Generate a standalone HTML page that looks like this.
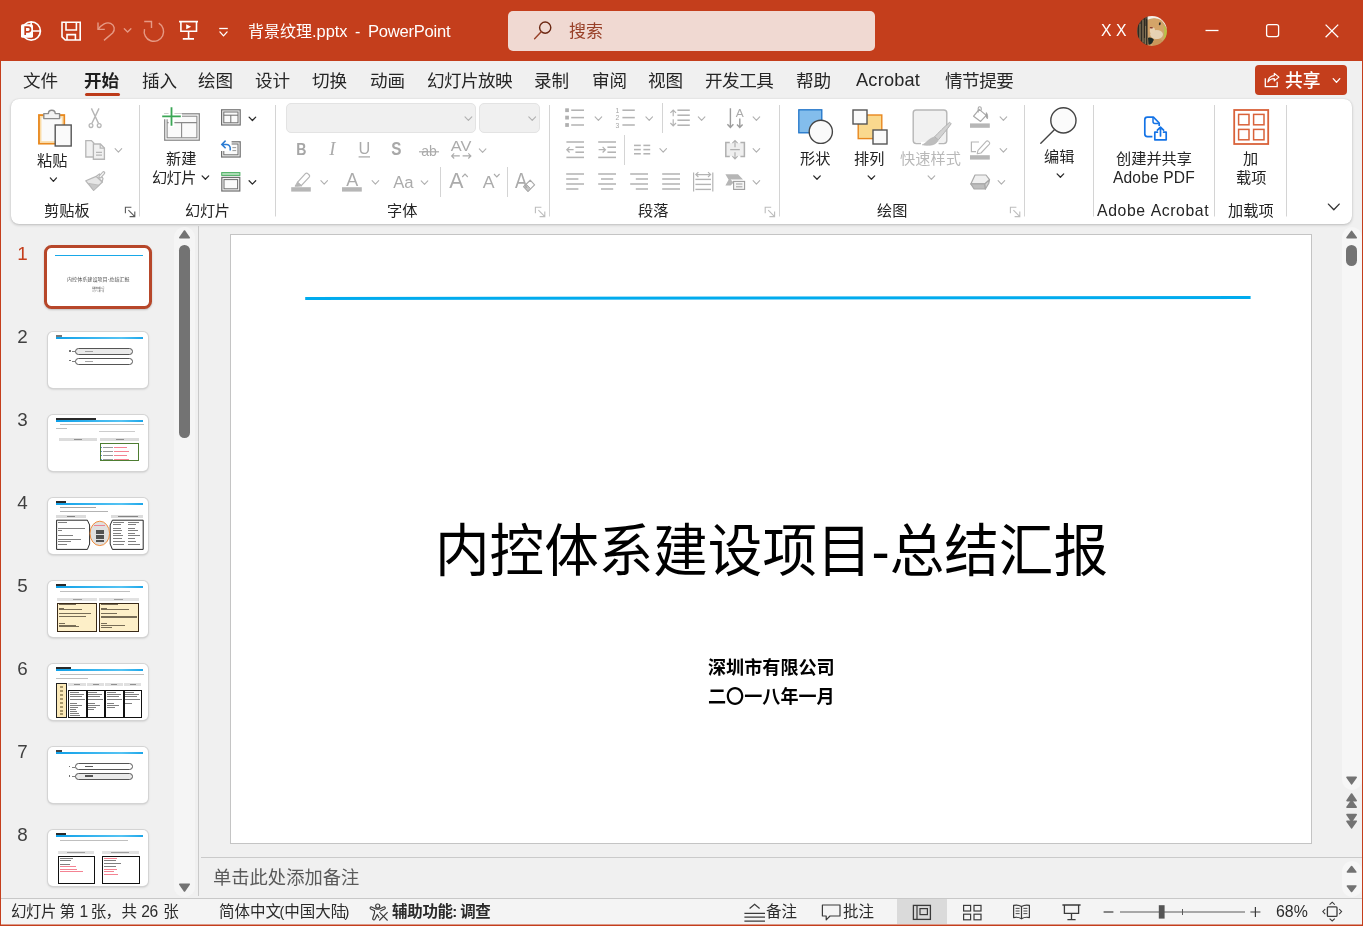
<!DOCTYPE html>
<html lang="zh-CN"><head><meta charset="utf-8"><title>背景纹理.pptx - PowerPoint</title>
<style>
html,body{margin:0;padding:0;background:#f0f0f0;}
body{width:1363px;height:926px;overflow:hidden;font-family:"Liberation Sans","Noto Sans CJK SC",sans-serif;}
#app{position:relative;width:1363px;height:926px;overflow:hidden;background:#f0f0f0;}
#app div{position:absolute;box-sizing:border-box;}
svg.t,svg.i{position:absolute;overflow:visible;display:block;}
svg.t text{font-family:"Liberation Sans","Noto Sans CJK SC",sans-serif;}
svg.i text{font-family:"Liberation Sans",sans-serif;}
#app{will-change:transform;}


</style></head>
<body>
<div id="app">
<div class="titlebar" style="left:0px;top:0px;width:1363px;height:61px;background:#C43E1C;"></div>
<svg class="i" style="left:0px;top:0px" width="1363" height="61" viewBox="0 0 1363 61" ><circle cx="31.2" cy="31" r="9.2" fill="none" stroke="#fff" stroke-width="1.7"/><path d="M31.2 21.8V31H40.4" fill="none" stroke="#fff" stroke-width="1.5"/><rect x="21" y="24.2" width="12" height="13.6" rx="1.6" fill="#fff"/><path d="M25.2 35V27.2H28.2A2.3 2.3 0 0 1 28.2 31.8H25.4" fill="none" stroke="#C43E1C" stroke-width="1.7"/><path d="M62 22.2H80.2V40H65.2L62 36.8Z" fill="none" stroke="#fff" stroke-width="1.6" stroke-linejoin="miter"/><path d="M66 22.2V30H76.4V22.2" fill="none" stroke="#fff" stroke-width="1.6"/><path d="M67 40V34.6H75.4V40" fill="none" stroke="#fff" stroke-width="1.6"/><path d="M98 22.5V29.4H104.8" fill="none" stroke="#E69A85" stroke-width="1.4"/><path d="M98.4 29.2C101.5 24.6 106.6 21.6 110.6 23.4C114.6 25.3 115.4 29.6 112.6 33L104 40.4" fill="none" stroke="#E69A85" stroke-width="1.4"/><path d="M124.3 28.75L127.6 32.05L130.9 28.75" fill="none" stroke="#E69A85" stroke-width="1.3" stroke-linecap="round" stroke-linejoin="round"/><path d="M158.75 23.2A9.7 9.7 0 1 1 144.53 29.1" fill="none" stroke="#E69A85" stroke-width="1.4"/><path d="M144.2 21.5H151.5V28" fill="none" stroke="#E69A85" stroke-width="1.4"/><path d="M179 21.6H198" fill="none" stroke="#fff" stroke-width="1.7"/><path d="M180.9 21.6V31.3H196.5V21.6" fill="none" stroke="#fff" stroke-width="1.6"/><path d="M186.2 24.2L191.2 26.7L186.2 29.2Z" fill="#fff"/><path d="M188.6 31.4V38.9M182.8 38.9H194" fill="none" stroke="#fff" stroke-width="1.6"/><path d="M219.2 28.5L227.8 28.5" stroke="#fff" stroke-width="1.3" stroke-linecap="butt" fill="none"/><path d="M219.9 31.9L223.5 35.9L227.1 31.9" fill="none" stroke="#fff" stroke-width="1.3" stroke-linecap="round" stroke-linejoin="round"/><path d="M1205.5 30.5L1218.5 30.5" stroke="#fff" stroke-width="1.3" stroke-linecap="butt" fill="none"/><rect x="1266.6" y="24.6" width="12" height="12" rx="2" fill="none" stroke="#fff" stroke-width="1.3"/><path d="M1325.6 24.6L1338.2 37.2M1338.2 24.6L1325.6 37.2" stroke="#fff" stroke-width="1.3" fill="none"/></svg>
<svg class="t" style="left:248px;top:20.6px" width="101.55" height="20.8" viewBox="0 -16 101.55 20.8" fill="#fff"><title>背景纹理.pptx</title><text x="0" y="0" font-size="16">背景纹理</text><text x="64" y="0" font-size="16.4">.pptx</text></svg>
<svg class="t" style="left:355.4px;top:20.6px" width="7.33" height="20.8" viewBox="0 -16 7.33 20.8" fill="#fff"><title>-</title><text x="0" y="0" font-size="16">-</text></svg>
<svg class="t" style="left:368.4px;top:20.6px" width="84.39" height="20.8" viewBox="0 -16 84.39 20.8" fill="#fff"><title>PowerPoint</title><text x="0" y="0" font-size="16.6" letter-spacing="-0.25">PowerPoint</text></svg>
<div class="search" style="left:508px;top:11px;width:367px;height:40px;background:#F0D9D2;border-radius:5px;"></div>
<svg class="i" style="left:508px;top:11px" width="367" height="40" viewBox="508 11 367 40" ><circle cx="545.2" cy="27.6" r="5.6" fill="none" stroke="#6B2712" stroke-width="1.4"/><path d="M541.2 31.8L534.6 38.8" stroke="#984028" stroke-width="1.4" stroke-linecap="round" fill="none"/></svg>
<svg class="t" style="left:569.4px;top:20px" width="36" height="22.1" viewBox="0 -17 36 22.1" fill="#984028"><title>搜索</title><text x="0" y="0" font-size="17">搜索</text></svg>
<svg class="t" style="left:1101.4px;top:20px" width="27.62" height="20.8" viewBox="0 -16 27.62 20.8" fill="#fff"><title>X X</title><text x="0" y="0" font-size="15.8" letter-spacing="0.05">X&#160;X</text></svg>
<svg class="i avatar" style="left:1137.1px;top:15.8px" width="30" height="30" viewBox="0 0 30 30"><defs><clipPath id="avc"><circle cx="15" cy="15" r="15"/></clipPath><filter id="avb" x="-10%" y="-10%" width="120%" height="120%"><feGaussianBlur stdDeviation="0.75"/></filter></defs><g clip-path="url(#avc)"><g filter="url(#avb)"><rect x="-2" y="-2" width="34" height="34" fill="#CFA46E"/><path d="M9 -2H32V16C29.6 13 28.4 8 24.6 4.4C20 1.6 13 1.6 9 5Z" fill="#F4F2EA"/><path d="M26.4 9C29 11 30.6 15 30.4 19C29.6 22 28 24 26.6 25C27.4 20 27.6 14 26.4 9Z" fill="#B9C247"/><ellipse cx="17.6" cy="11.6" rx="8.2" ry="9" fill="#D4A468"/><ellipse cx="19.6" cy="18.6" rx="6.4" ry="4.6" fill="#E6D2B4"/><ellipse cx="15.4" cy="14.4" rx="2.6" ry="3.2" fill="#E9D3B3"/><path d="M12.6 11.4C13.8 10.8 15.4 11 16.4 11.8C15.6 12.8 13.8 13 12.6 11.4Z" fill="#8A3A2A"/><ellipse cx="22.8" cy="7.8" rx="0.9" ry="1.5" fill="#2A2A22" transform="rotate(15 22.8 7.8)"/><path d="M11 22C13 21 16 22 17 24C16 27 14 29 11.4 28.6Z" fill="#1E2A26"/><path d="M16 25C20 22 24 23 26 25C24 29 20 31 15 30.6Z" fill="#C9975A"/><rect x="-2" y="-2" width="12.6" height="34" fill="#514838"/><path d="M1.6 6V28M4.4 2V30M7.4 1V22M9.6 3V30" stroke="#2E2A20" stroke-width="1.1" fill="none"/><path d="M3 8V24M6 4V26M8.6 10V28" stroke="#8E7E5C" stroke-width="0.9" fill="none"/></g></g></svg>
<div class="tabs" style="left:1px;top:61px;width:1361px;height:38px;background:#F0F0F0;"></div>
<svg class="t" style="left:22.8px;top:69px" width="37.2" height="22.88" viewBox="0 -17.6 37.2 22.88" fill="#262626"><title>文件</title><text x="0" y="0" font-size="17.6">文件</text></svg>
<svg class="t" style="left:141.6px;top:69px" width="37.2" height="22.88" viewBox="0 -17.6 37.2 22.88" fill="#262626"><title>插入</title><text x="0" y="0" font-size="17.6">插入</text></svg>
<svg class="t" style="left:198.4px;top:69px" width="37.2" height="22.88" viewBox="0 -17.6 37.2 22.88" fill="#262626"><title>绘图</title><text x="0" y="0" font-size="17.6">绘图</text></svg>
<svg class="t" style="left:255.4px;top:69px" width="37.2" height="22.88" viewBox="0 -17.6 37.2 22.88" fill="#262626"><title>设计</title><text x="0" y="0" font-size="17.6">设计</text></svg>
<svg class="t" style="left:312.4px;top:69px" width="37.2" height="22.88" viewBox="0 -17.6 37.2 22.88" fill="#262626"><title>切换</title><text x="0" y="0" font-size="17.6">切换</text></svg>
<svg class="t" style="left:369.6px;top:69px" width="37.2" height="22.88" viewBox="0 -17.6 37.2 22.88" fill="#262626"><title>动画</title><text x="0" y="0" font-size="17.6">动画</text></svg>
<svg class="t" style="left:426.8px;top:69px" width="87.25" height="22.88" viewBox="0 -17.6 87.25 22.88" fill="#262626"><title>幻灯片放映</title><text x="0" y="0" font-size="17.6" letter-spacing="-0.55">幻灯片放映</text></svg>
<svg class="t" style="left:534.4px;top:69px" width="37.2" height="22.88" viewBox="0 -17.6 37.2 22.88" fill="#262626"><title>录制</title><text x="0" y="0" font-size="17.6">录制</text></svg>
<svg class="t" style="left:591.6px;top:69px" width="37.2" height="22.88" viewBox="0 -17.6 37.2 22.88" fill="#262626"><title>审阅</title><text x="0" y="0" font-size="17.6">审阅</text></svg>
<svg class="t" style="left:648.4px;top:69px" width="37.2" height="22.88" viewBox="0 -17.6 37.2 22.88" fill="#262626"><title>视图</title><text x="0" y="0" font-size="17.6">视图</text></svg>
<svg class="t" style="left:705.4px;top:69px" width="70.4" height="22.88" viewBox="0 -17.6 70.4 22.88" fill="#262626"><title>开发工具</title><text x="0" y="0" font-size="17.6" letter-spacing="-0.5">开发工具</text></svg>
<svg class="t" style="left:796.4px;top:69px" width="37.2" height="22.88" viewBox="0 -17.6 37.2 22.88" fill="#262626"><title>帮助</title><text x="0" y="0" font-size="17.6">帮助</text></svg>
<svg class="t" style="left:944.8px;top:69px" width="70.4" height="22.88" viewBox="0 -17.6 70.4 22.88" fill="#262626"><title>情节提要</title><text x="0" y="0" font-size="17.6" letter-spacing="-0.5">情节提要</text></svg>
<svg class="t" style="left:84.3px;top:69px" width="37.2" height="22.88" viewBox="0 -17.6 37.2 22.88" fill="#1f1f1f"><title>开始</title><text x="0" y="0" font-size="17.6" font-weight="bold">开始</text></svg>
<svg class="t" style="left:856.2px;top:68.4px" width="66.12" height="22.88" viewBox="0 -17.6 66.12 22.88" fill="#262626"><title>Acrobat</title><text x="0" y="0" font-size="18.2" letter-spacing="0.2">Acrobat</text></svg>
<div style="left:85px;top:93px;width:35px;height:3px;background:#BC3A19;border-radius:1.5px;"></div>
<div class="share" style="left:1255px;top:65px;width:92px;height:30px;background:#C43E1C;border-radius:4px;"></div>
<svg class="i" style="left:1255px;top:65px" width="92" height="30" viewBox="1255 65 92 30" ><path d="M1265.3 78.2V86.6H1277.2V81.8" fill="none" stroke="#fff" stroke-width="1.3"/><path d="M1274.3 73.4L1278.9 77.1L1274.3 80.9V78.7C1271.4 78.7 1269.4 79.7 1267.9 82C1268.3 78.2 1270.8 75.9 1274.3 75.6Z" fill="none" stroke="#fff" stroke-width="1.2" stroke-linejoin="round"/><path d="M1333.2 78.65L1336.5 82.35L1339.8 78.65" fill="none" stroke="#fff" stroke-width="1.35" stroke-linecap="round" stroke-linejoin="round"/></svg>
<svg class="t" style="left:1284.5px;top:68.6px" width="37.6" height="23.14" viewBox="0 -17.8 37.6 23.14" fill="#fff"><title>共享</title><text x="0" y="0" font-size="17.8" font-weight="500">共享</text></svg>
<div class="ribbon" style="left:11px;top:99px;width:1341px;height:124.5px;background:#fff;border-radius:8px;box-shadow:0 1px 3px rgba(0,0,0,.22),0 0 1px rgba(0,0,0,.12);"></div>
<div class="combo" style="left:286px;top:103px;width:190px;height:30px;background:#F0F0F0;border:1px solid #E3E3E3;border-radius:5px;"></div>
<div class="combo" style="left:478.5px;top:103px;width:61.5px;height:30px;background:#F0F0F0;border:1px solid #E3E3E3;border-radius:5px;"></div>
<svg class="i" style="left:11px;top:99px" width="1341" height="124" viewBox="11 99 1341 124" ><path d="M139.5 105L139.5 216.5" stroke="#D4D4D4" stroke-width="1" stroke-linecap="butt" fill="none"/><path d="M275.5 105L275.5 216.5" stroke="#D4D4D4" stroke-width="1" stroke-linecap="butt" fill="none"/><path d="M549.5 105L549.5 216.5" stroke="#D4D4D4" stroke-width="1" stroke-linecap="butt" fill="none"/><path d="M779.5 105L779.5 216.5" stroke="#D4D4D4" stroke-width="1" stroke-linecap="butt" fill="none"/><path d="M1024.5 105L1024.5 216.5" stroke="#D4D4D4" stroke-width="1" stroke-linecap="butt" fill="none"/><path d="M1093.5 105L1093.5 216.5" stroke="#D4D4D4" stroke-width="1" stroke-linecap="butt" fill="none"/><path d="M1214.5 105L1214.5 216.5" stroke="#D4D4D4" stroke-width="1" stroke-linecap="butt" fill="none"/><path d="M1286.5 105L1286.5 216.5" stroke="#D4D4D4" stroke-width="1" stroke-linecap="butt" fill="none"/><path d="M440.5 167L440.5 197" stroke="#D4D4D4" stroke-width="1" stroke-linecap="butt" fill="none"/><path d="M507.5 167L507.5 197" stroke="#D4D4D4" stroke-width="1" stroke-linecap="butt" fill="none"/><path d="M662.5 103L662.5 133" stroke="#D4D4D4" stroke-width="1" stroke-linecap="butt" fill="none"/><path d="M624.5 135L624.5 165" stroke="#D4D4D4" stroke-width="1" stroke-linecap="butt" fill="none"/><rect x="39" y="115.1" width="25.2" height="28.5" fill="#FAFAFA" stroke="#E8891F" stroke-width="1.9"/><rect x="40.7" y="116.8" width="21.8" height="25.1" fill="none" stroke="#FBDCA6" stroke-width="1.5"/><path d="M43.8 118.6V113.6H48.4A3.4 3.4 0 0 1 55.2 113.6H59.6V118.6Z" fill="#F3F3F3" stroke="#8C8C8C" stroke-width="1.4" stroke-linejoin="round"/><rect x="55.2" y="125" width="16" height="21" fill="#FAFAFA" stroke="#555" stroke-width="1.4"/><path d="M50.3 177.9L53.4 181.3L56.5 177.9" fill="none" stroke="#2a2a2a" stroke-width="1.25" stroke-linecap="round" stroke-linejoin="round"/><path d="M91.4 108.4L98.5 123.4M99 108.4L91.9 123.4" fill="none" stroke="#B6B6B6" stroke-width="1.35"/><circle cx="91" cy="125.6" r="1.9" fill="#fff" stroke="#B6B6B6" stroke-width="1.3"/><circle cx="99.2" cy="125.6" r="1.9" fill="#fff" stroke="#B6B6B6" stroke-width="1.3"/><path d="M85.8 140.6H91.4L93.8 143V157H85.8Z" fill="#F1F1F1" stroke="#B6B6B6" stroke-width="1.3"/><path d="M93.4 144H100.4L104.4 148V159.2H93.4Z" fill="#F1F1F1" stroke="#B6B6B6" stroke-width="1.35"/><path d="M100.2 144.2V148.2H104.2M96 152.4H102M96 155.2H102" fill="none" stroke="#B6B6B6" stroke-width="1.2"/><path d="M115.1 148.7L118.4 152.1L121.7 148.7" fill="none" stroke="#B0B0B0" stroke-width="1.1" stroke-linecap="round" stroke-linejoin="round"/><path d="M85.8 180.8L96.2 176.4L102.4 182L93.6 190.4Z" fill="#E6E6E6" stroke="#B6B6B6" stroke-width="1.2" stroke-linejoin="round"/><path d="M88.6 183.4L99.2 185.2L93.6 190.4Z" fill="#C8C8C8" stroke="#B6B6B6" stroke-width="0.8" stroke-linejoin="round"/><path d="M96.4 176.2L99.4 174L103 178.4L102.2 181.8Z" fill="#F4F4F4" stroke="#B6B6B6" stroke-width="1.2" stroke-linejoin="round"/><path d="M100 176.8L103.6 172.8" stroke="#B6B6B6" stroke-width="3.4" stroke-linecap="round" fill="none"/><path d="M100.2 176.6L103.4 173" stroke="#F6F6F6" stroke-width="1.3" stroke-linecap="round" fill="none"/><path d="M125.4 213.2V207.2H131.4" fill="none" stroke="#5a5a5a" stroke-width="1.1"/><path d="M128.4 210.2L134.6 216.4M134.8 211.4V216.6H129.6" fill="none" stroke="#5a5a5a" stroke-width="1.1"/><rect x="164.7" y="113.8" width="34.6" height="26.4" fill="#fff" stroke="#8A8A8A" stroke-width="1.3"/><rect x="167.1" y="116.2" width="29.8" height="21.6" fill="#FAFAFA" stroke="#8A8A8A" stroke-width="1.1"/><path d="M167.1 122.6H196.9M181.6 122.6V137.8" fill="none" stroke="#8A8A8A" stroke-width="1.1"/><path d="M168.6 106H174.4V113.4H182V119.2H174.4V127H168.6V119.2H160.6V113.4H168.6Z" fill="#fff"/><path d="M171.5 107.2V125.8M162.2 116.3H180.8" fill="none" stroke="#3AA655" stroke-width="1.8"/><path d="M202.1 175.9L205.4 179.3L208.7 175.9" fill="none" stroke="#2a2a2a" stroke-width="1.25" stroke-linecap="round" stroke-linejoin="round"/><rect x="221.6" y="109.8" width="18.6" height="15.2" fill="#F2F2F2" stroke="#6E6E6E" stroke-width="1.2"/><rect x="223.8" y="112" width="14.2" height="10.8" fill="#FAFAFA" stroke="#6E6E6E" stroke-width="1"/><path d="M223.8 115.2H238M230.8 115.2V122.8" fill="none" stroke="#6E6E6E" stroke-width="1"/><path d="M249.1 117.1L252.4 120.5L255.7 117.1" fill="none" stroke="#2a2a2a" stroke-width="1.25" stroke-linecap="round" stroke-linejoin="round"/><rect x="221.6" y="141.8" width="18.6" height="15.2" fill="#F2F2F2" stroke="#6E6E6E" stroke-width="1.2"/><rect x="223.8" y="144" width="14.2" height="10.8" fill="#FAFAFA" stroke="#6E6E6E" stroke-width="1"/><rect x="219" y="139" width="12.6" height="12" fill="#fff"/><path d="M225.6 140.6L221.8 144.4L225.6 148.2M222.2 144.4H226.6A3.6 3.6 0 0 1 230.2 148V150.6" fill="none" stroke="#2B7CD3" stroke-width="1.5"/><path d="M232.4 147.6H236.2M232.4 150.6H236.2" stroke="#9a9a9a" stroke-width="1" fill="none"/><rect x="221.7" y="172.6" width="18.2" height="2.8" fill="#B5E0BD" stroke="#4CAF62" stroke-width="1"/><rect x="221.8" y="177.4" width="18" height="13.6" fill="#F2F2F2" stroke="#6E6E6E" stroke-width="1.2"/><rect x="224" y="179.6" width="13.6" height="9.2" fill="#FAFAFA" stroke="#6E6E6E" stroke-width="1"/><path d="M249.1 180.7L252.4 184.1L255.7 180.7" fill="none" stroke="#2a2a2a" stroke-width="1.25" stroke-linecap="round" stroke-linejoin="round"/><path d="M465 116.9L468.4 120.3L471.8 116.9" fill="none" stroke="#B0B0B0" stroke-width="1.1" stroke-linecap="round" stroke-linejoin="round"/><path d="M528.8 116.9L532.2 120.3L535.6 116.9" fill="none" stroke="#B0B0B0" stroke-width="1.1" stroke-linecap="round" stroke-linejoin="round"/><path d="M358.6 156.9L370 156.9" stroke="#ABABAB" stroke-width="1.3" stroke-linecap="butt" fill="none"/><path d="M419 151.8L439 151.8" stroke="#ABABAB" stroke-width="1.2" stroke-linecap="butt" fill="none"/><path d="M451.6 155.9H459.8M454.2 153.3L451.6 155.9L454.2 158.5M462.6 155.9H470.9M468.3 153.3L470.9 155.9L468.3 158.5" fill="none" stroke="#ABABAB" stroke-width="1.1"/><path d="M479.3 148.9L482.6 152.3L485.9 148.9" fill="none" stroke="#B0B0B0" stroke-width="1.1" stroke-linecap="round" stroke-linejoin="round"/><rect x="291.2" y="187.2" width="19.6" height="4.4" fill="#B6B6B6"/><path d="M297.4 182.4L305.4 173.6A1.6 1.6 0 0 1 307.8 173.6L309.2 175A1.6 1.6 0 0 1 309.2 177.2L301.2 185.6Z" fill="#fff" stroke="#B6B6B6" stroke-width="1.2"/><path d="M297.6 182.2L301.4 185.8L298.6 186.2L295 186.2Z" fill="#B6B6B6" stroke="#B6B6B6" stroke-width="1"/><path d="M320.9 180.7L324.2 184.1L327.5 180.7" fill="none" stroke="#B0B0B0" stroke-width="1.1" stroke-linecap="round" stroke-linejoin="round"/><rect x="342" y="187.2" width="19.8" height="4.4" fill="#B6B6B6"/><path d="M372.1 180.7L375.4 184.1L378.7 180.7" fill="none" stroke="#B0B0B0" stroke-width="1.1" stroke-linecap="round" stroke-linejoin="round"/><path d="M421.2 180.9L424.5 184.3L427.8 180.9" fill="none" stroke="#B0B0B0" stroke-width="1.1" stroke-linecap="round" stroke-linejoin="round"/><path d="M462.2 177L465 174L467.8 177" fill="none" stroke="#ABABAB" stroke-width="1.1"/><path d="M494 174L496.8 177L499.6 174" fill="none" stroke="#ABABAB" stroke-width="1.1"/><path d="M523.6 186.6L530.2 180.2L534.6 184.8L528 191.4Z" fill="#fff" stroke="#ABABAB" stroke-width="1.2" stroke-linejoin="round"/><path d="M523.6 186.6L526.2 184.1L530.6 188.7L528 191.4Z" fill="#C4C4C4" stroke="#ABABAB" stroke-width="1" stroke-linejoin="round"/><path d="M535.4 213.2V207.2H541.4" fill="none" stroke="#BDBDBD" stroke-width="1.1"/><path d="M538.4 210.2L544.6 216.4M544.8 211.4V216.6H539.6" fill="none" stroke="#BDBDBD" stroke-width="1.1"/><rect x="565.2" y="108.3" width="3.7" height="3.8" fill="#B0B0B0"/><path d="M571.2 110.2L584 110.2" stroke="#B4B4B4" stroke-width="1.55" stroke-linecap="butt" fill="none"/><rect x="565.2" y="115.7" width="3.7" height="3.8" fill="#B0B0B0"/><path d="M571.2 117.6L584 117.6" stroke="#B4B4B4" stroke-width="1.55" stroke-linecap="butt" fill="none"/><rect x="565.2" y="123.1" width="3.7" height="3.8" fill="#B0B0B0"/><path d="M571.2 125L584 125" stroke="#B4B4B4" stroke-width="1.55" stroke-linecap="butt" fill="none"/><path d="M595.1 116.9L598.4 120.3L601.7 116.9" fill="none" stroke="#B0B0B0" stroke-width="1.1" stroke-linecap="round" stroke-linejoin="round"/><path d="M622.4 110.2L634.8 110.2" stroke="#B4B4B4" stroke-width="1.55" stroke-linecap="butt" fill="none"/><path d="M622.4 117.6L634.8 117.6" stroke="#B4B4B4" stroke-width="1.55" stroke-linecap="butt" fill="none"/><path d="M622.4 125L634.8 125" stroke="#B4B4B4" stroke-width="1.55" stroke-linecap="butt" fill="none"/><text x="615.6" y="112.8" font-size="6.8" fill="#A6A6A6">1</text><text x="615.6" y="120.4" font-size="6.8" fill="#A6A6A6">2</text><text x="615.6" y="127.9" font-size="6.8" fill="#A6A6A6">3</text><path d="M645.9 116.9L649.2 120.3L652.5 116.9" fill="none" stroke="#B0B0B0" stroke-width="1.1" stroke-linecap="round" stroke-linejoin="round"/><path d="M677.4 110.2L689.8 110.2" stroke="#B4B4B4" stroke-width="1.55" stroke-linecap="butt" fill="none"/><path d="M677.4 115.2L689.8 115.2" stroke="#B4B4B4" stroke-width="1.55" stroke-linecap="butt" fill="none"/><path d="M677.4 120.2L689.8 120.2" stroke="#B4B4B4" stroke-width="1.55" stroke-linecap="butt" fill="none"/><path d="M677.4 125.2L689.8 125.2" stroke="#B4B4B4" stroke-width="1.55" stroke-linecap="butt" fill="none"/><path d="M673.2 110V116.2M670.4 112.8L673.2 110L676 112.8M673.2 119.2V125.8M670.4 123L673.2 125.8L676 123" fill="none" stroke="#B4B4B4" stroke-width="1.2"/><path d="M698.3 116.9L701.6 120.3L704.9 116.9" fill="none" stroke="#B0B0B0" stroke-width="1.1" stroke-linecap="round" stroke-linejoin="round"/><path d="M730.4 108.2V127.4M727.4 124.2L730.4 127.4L733.4 124.2" fill="none" stroke="#9C9C9C" stroke-width="1.4"/><path d="M739.8 118.6V127.4M737 124.4L739.8 127.4L742.6 124.4" fill="none" stroke="#9C9C9C" stroke-width="1.4"/><path d="M753.1 116.9L756.4 120.3L759.7 116.9" fill="none" stroke="#B0B0B0" stroke-width="1.1" stroke-linecap="round" stroke-linejoin="round"/><path d="M566.4 142L584 142" stroke="#B4B4B4" stroke-width="1.55" stroke-linecap="butt" fill="none"/><path d="M566.4 157.4L584 157.4" stroke="#B4B4B4" stroke-width="1.55" stroke-linecap="butt" fill="none"/><path d="M575.4 147.2L584 147.2" stroke="#B4B4B4" stroke-width="1.55" stroke-linecap="butt" fill="none"/><path d="M575.4 152.2L584 152.2" stroke="#B4B4B4" stroke-width="1.55" stroke-linecap="butt" fill="none"/><path d="M566.8 149.7H573.6M569.6 146.9L566.8 149.7L569.6 152.5" fill="none" stroke="#B4B4B4" stroke-width="1.25"/><path d="M598.2 142L616 142" stroke="#B4B4B4" stroke-width="1.55" stroke-linecap="butt" fill="none"/><path d="M598.2 157.4L616 157.4" stroke="#B4B4B4" stroke-width="1.55" stroke-linecap="butt" fill="none"/><path d="M607.4 147.2L616 147.2" stroke="#B4B4B4" stroke-width="1.55" stroke-linecap="butt" fill="none"/><path d="M607.4 152.2L616 152.2" stroke="#B4B4B4" stroke-width="1.55" stroke-linecap="butt" fill="none"/><path d="M598.6 149.7H605.4M602.6 146.9L605.4 149.7L602.6 152.5" fill="none" stroke="#B4B4B4" stroke-width="1.25"/><path d="M634 145.4L640.8 145.4" stroke="#B4B4B4" stroke-width="1.55" stroke-linecap="butt" fill="none"/><path d="M643.4 145.4L650.2 145.4" stroke="#B4B4B4" stroke-width="1.55" stroke-linecap="butt" fill="none"/><path d="M634 149.6L640.8 149.6" stroke="#B4B4B4" stroke-width="1.55" stroke-linecap="butt" fill="none"/><path d="M643.4 149.6L650.2 149.6" stroke="#B4B4B4" stroke-width="1.55" stroke-linecap="butt" fill="none"/><path d="M634 153.8L640.8 153.8" stroke="#B4B4B4" stroke-width="1.55" stroke-linecap="butt" fill="none"/><path d="M643.4 153.8L650.2 153.8" stroke="#B4B4B4" stroke-width="1.55" stroke-linecap="butt" fill="none"/><path d="M659.9 148.7L663.2 152.1L666.5 148.7" fill="none" stroke="#B0B0B0" stroke-width="1.1" stroke-linecap="round" stroke-linejoin="round"/><rect x="725.8" y="143" width="18.6" height="13.2" fill="#EFEFEF"/><path d="M729.8 142.6H725.8V156.6H729.8M740.4 142.6H744.4V156.6H740.4" fill="none" stroke="#B0B0B0" stroke-width="1.5"/><path d="M735 140.6V147.2M735 152.2V158.8M732.4 143.2L735 140.6L737.6 143.2M732.4 156.2L735 158.8L737.6 156.2M730.2 149.7H739.8" fill="none" stroke="#B0B0B0" stroke-width="1.2"/><path d="M753.1 148.7L756.4 152.1L759.7 148.7" fill="none" stroke="#B0B0B0" stroke-width="1.1" stroke-linecap="round" stroke-linejoin="round"/><path d="M566.2 174L584 174" stroke="#B4B4B4" stroke-width="1.55" stroke-linecap="butt" fill="none"/><path d="M598.2 174L616 174" stroke="#B4B4B4" stroke-width="1.55" stroke-linecap="butt" fill="none"/><path d="M630.2 174L648 174" stroke="#B4B4B4" stroke-width="1.55" stroke-linecap="butt" fill="none"/><path d="M662.2 174L680 174" stroke="#B4B4B4" stroke-width="1.55" stroke-linecap="butt" fill="none"/><path d="M566.2 179L578.4 179" stroke="#B4B4B4" stroke-width="1.55" stroke-linecap="butt" fill="none"/><path d="M601 179L613.2 179" stroke="#B4B4B4" stroke-width="1.55" stroke-linecap="butt" fill="none"/><path d="M635.8 179L648 179" stroke="#B4B4B4" stroke-width="1.55" stroke-linecap="butt" fill="none"/><path d="M662.2 179L680 179" stroke="#B4B4B4" stroke-width="1.55" stroke-linecap="butt" fill="none"/><path d="M566.2 184L584 184" stroke="#B4B4B4" stroke-width="1.55" stroke-linecap="butt" fill="none"/><path d="M598.2 184L616 184" stroke="#B4B4B4" stroke-width="1.55" stroke-linecap="butt" fill="none"/><path d="M630.2 184L648 184" stroke="#B4B4B4" stroke-width="1.55" stroke-linecap="butt" fill="none"/><path d="M662.2 184L680 184" stroke="#B4B4B4" stroke-width="1.55" stroke-linecap="butt" fill="none"/><path d="M566.2 189L578.4 189" stroke="#B4B4B4" stroke-width="1.55" stroke-linecap="butt" fill="none"/><path d="M601 189L613.2 189" stroke="#B4B4B4" stroke-width="1.55" stroke-linecap="butt" fill="none"/><path d="M635.8 189L648 189" stroke="#B4B4B4" stroke-width="1.55" stroke-linecap="butt" fill="none"/><path d="M662.2 189L680 189" stroke="#B4B4B4" stroke-width="1.55" stroke-linecap="butt" fill="none"/><path d="M695.4 179.4L711 179.4" stroke="#B4B4B4" stroke-width="1.4" stroke-linecap="butt" fill="none"/><path d="M695.4 184.4L711 184.4" stroke="#B4B4B4" stroke-width="1.4" stroke-linecap="butt" fill="none"/><path d="M695.4 189.4L711 189.4" stroke="#B4B4B4" stroke-width="1.4" stroke-linecap="butt" fill="none"/><path d="M693.6 172.4V191.6M712.8 172.4V191.6" stroke="#B4B4B4" stroke-width="1.2" fill="none"/><path d="M695.8 174.6H710.6M698.4 172.2L695.8 174.6L698.4 177M708 172.2L710.6 174.6L708 177" fill="none" stroke="#B4B4B4" stroke-width="1.15"/><path d="M725.4 174.2H738L743 179.4H730.6L733.6 182.4L730.6 185.4H725.4L728.6 179.8Z" fill="#B6B6B6"/><rect x="733.6" y="181.4" width="11" height="8" fill="#F4F4F4" stroke="#9E9E9E" stroke-width="1.1"/><path d="M736 184H742.4M736 186.8H742.4" stroke="#9E9E9E" stroke-width="1" fill="none"/><path d="M753.1 180.7L756.4 184.1L759.7 180.7" fill="none" stroke="#B0B0B0" stroke-width="1.1" stroke-linecap="round" stroke-linejoin="round"/><path d="M765.2 213.2V207.2H771.2" fill="none" stroke="#BDBDBD" stroke-width="1.1"/><path d="M768.2 210.2L774.4 216.4M774.6 211.4V216.6H769.4" fill="none" stroke="#BDBDBD" stroke-width="1.1"/><rect x="798.8" y="109.8" width="23" height="23" fill="#83BDEC" stroke="#1E73C8" stroke-width="1.3"/><circle cx="820.8" cy="131.8" r="11.6" fill="#FAFAFA" stroke="#454545" stroke-width="1.4"/><path d="M813.7 175.9L817 179.3L820.3 175.9" fill="none" stroke="#2a2a2a" stroke-width="1.25" stroke-linecap="round" stroke-linejoin="round"/><rect x="858.2" y="115" width="23.6" height="23.6" fill="#FAD98E" stroke="#E8871E" stroke-width="1.4"/><rect x="853" y="110" width="14" height="14" fill="#FAFAFA" stroke="#555" stroke-width="1.4"/><rect x="873" y="130" width="14" height="14" fill="#FAFAFA" stroke="#555" stroke-width="1.4"/><path d="M868.1 175.9L871.4 179.3L874.7 175.9" fill="none" stroke="#2a2a2a" stroke-width="1.25" stroke-linecap="round" stroke-linejoin="round"/><rect x="913.2" y="110" width="33.6" height="33.6" rx="3" fill="#F1F1F1" stroke="#B6B6B6" stroke-width="1.4"/><path d="M921 144H938.6" stroke="#fff" stroke-width="4.4" fill="none"/><path d="M949.6 122.2L951.2 123.8C946.8 129.8 941.8 135.6 938.4 139.8L934.6 136.8C938.6 132.6 944.4 126.8 949.6 122.2Z" fill="#D2D2D2" stroke="#B2B2B2" stroke-width="1" stroke-linejoin="round"/><path d="M934.4 137L938 140C937.4 143.8 932 146.6 922.2 144.8C926.4 143.4 928 138.8 934.4 137Z" fill="#BEBEBE" stroke="#B2B2B2" stroke-width="0.6"/><path d="M928.1 175.9L931.4 179.3L934.7 175.9" fill="none" stroke="#B0B0B0" stroke-width="1.2" stroke-linecap="round" stroke-linejoin="round"/><rect x="970" y="123.4" width="19.8" height="4.4" fill="#B6B6B6"/><path d="M973.6 116.2L979.2 109.4L986.2 115.4L980.6 121.4Z" fill="#fff" stroke="#A8A8A8" stroke-width="1.2" stroke-linejoin="round"/><path d="M978.2 112.4V108.2A1.5 1.5 0 0 1 981.2 108.2V110.6" fill="none" stroke="#A8A8A8" stroke-width="1.1"/><path d="M986.4 112.6C987.6 114.4 988 116.6 987.4 118.8C986.2 118 985.6 116 986.4 112.6Z" fill="#9E9E9E" stroke="#9E9E9E" stroke-width="0.8"/><path d="M1000.1 116.9L1003.4 120.3L1006.7 116.9" fill="none" stroke="#B0B0B0" stroke-width="1.1" stroke-linecap="round" stroke-linejoin="round"/><rect x="970" y="155.2" width="19.8" height="4.4" fill="#B6B6B6"/><path d="M979 142H971.4V151.6H976" fill="none" stroke="#B6B6B6" stroke-width="1.2"/><path d="M978 150.4L986.2 141.4A1.5 1.5 0 0 1 988.4 141.4L989.2 142.2A1.5 1.5 0 0 1 989.2 144.4L981 153L977.2 153.8Z" fill="#fff" stroke="#B6B6B6" stroke-width="1.1" stroke-linejoin="round"/><path d="M1000.1 148.7L1003.4 152.1L1006.7 148.7" fill="none" stroke="#B0B0B0" stroke-width="1.1" stroke-linecap="round" stroke-linejoin="round"/><path d="M975 175H986L989.5 179.7L984.9 183.9H970.8Z" fill="#F0F0F0" stroke="#A8A8A8" stroke-width="1.2" stroke-linejoin="round"/><path d="M970.8 183.9H984.9L985.4 189H974.1Z" fill="#BDBDBD" stroke="#A8A8A8" stroke-width="1.2" stroke-linejoin="round"/><path d="M984.9 183.9L989.5 179.7L988.8 183.2L985.4 189Z" fill="#D4D4D4" stroke="#A8A8A8" stroke-width="1.2" stroke-linejoin="round"/><path d="M998.1 180.7L1001.4 184.1L1004.7 180.7" fill="none" stroke="#B0B0B0" stroke-width="1.1" stroke-linecap="round" stroke-linejoin="round"/><path d="M1010.4 213.2V207.2H1016.4" fill="none" stroke="#BDBDBD" stroke-width="1.1"/><path d="M1013.4 210.2L1019.6 216.4M1019.8 211.4V216.6H1014.6" fill="none" stroke="#BDBDBD" stroke-width="1.1"/><circle cx="1063.4" cy="120.4" r="12.6" fill="#FBFBFB" stroke="#444" stroke-width="1.4"/><path d="M1054.6 129.6L1040.8 143.2" stroke="#444" stroke-width="1.4" stroke-linecap="round" fill="none"/><path d="M1057.1 173.9L1060.4 177.3L1063.7 173.9" fill="none" stroke="#2a2a2a" stroke-width="1.25" stroke-linecap="round" stroke-linejoin="round"/><path d="M1152.4 136.6H1147.4A2.6 2.6 0 0 1 1144.8 134V119.8A2.6 2.6 0 0 1 1147.4 117.2H1153.4L1159.2 123V126" fill="none" stroke="#1473E6" stroke-width="1.7" stroke-linejoin="round"/><path d="M1153 117.6V121.4A2 2 0 0 0 1155 123.4H1158.8" fill="none" stroke="#1473E6" stroke-width="1.5"/><path d="M1157.4 132.2H1154.8V139.8H1166.2V132.2H1163.6" fill="none" stroke="#1473E6" stroke-width="1.7" stroke-linejoin="round" stroke-linecap="round"/><path d="M1160.5 136V127.4M1157.4 130.2L1160.5 127.2L1163.6 130.2" fill="none" stroke="#1473E6" stroke-width="1.7" stroke-linejoin="round" stroke-linecap="round"/><rect x="1234.2" y="110" width="34" height="34" fill="none" stroke="#D9623A" stroke-width="1.8"/><rect x="1238.6" y="114.4" width="10.4" height="10.4" fill="none" stroke="#D9623A" stroke-width="1.5"/><rect x="1253.6" y="114.4" width="10.4" height="10.4" fill="none" stroke="#D9623A" stroke-width="1.5"/><rect x="1238.6" y="129.4" width="10.4" height="10.4" fill="none" stroke="#D9623A" stroke-width="1.5"/><rect x="1253.6" y="129.4" width="10.4" height="10.4" fill="none" stroke="#D9623A" stroke-width="1.5"/><path d="M1328.4 204.1L1333.8 209.7L1339.2 204.1" fill="none" stroke="#333" stroke-width="1.35" stroke-linecap="round" stroke-linejoin="round"/></svg>
<svg class="t" style="left:36.7px;top:150.6px" width="32.4" height="19.76" viewBox="0 -15.2 32.4 19.76" fill="#242424"><title>粘贴</title><text x="0" y="0" font-size="15.2">粘贴</text></svg>
<svg class="t" style="left:44.4px;top:201px" width="47.6" height="19.76" viewBox="0 -15.2 47.6 19.76" fill="#242424"><title>剪贴板</title><text x="0" y="0" font-size="15.2">剪贴板</text></svg>
<svg class="t" style="left:166.2px;top:149px" width="32.4" height="19.76" viewBox="0 -15.2 32.4 19.76" fill="#242424"><title>新建</title><text x="0" y="0" font-size="15.2">新建</text></svg>
<svg class="t" style="left:152.4px;top:168px" width="45.8" height="19.76" viewBox="0 -15.2 45.8 19.76" fill="#242424"><title>幻灯片</title><text x="0" y="0" font-size="15.2" letter-spacing="-0.6">幻灯片</text></svg>
<svg class="t" style="left:184.8px;top:201px" width="46.7" height="19.76" viewBox="0 -15.2 46.7 19.76" fill="#242424"><title>幻灯片</title><text x="0" y="0" font-size="15.2" letter-spacing="-0.3">幻灯片</text></svg>
<svg class="t" style="left:386.5px;top:201px" width="32.4" height="19.76" viewBox="0 -15.2 32.4 19.76" fill="#242424"><title>字体</title><text x="0" y="0" font-size="15.2">字体</text></svg>
<svg class="t" style="left:638.2px;top:201px" width="32.4" height="19.76" viewBox="0 -15.2 32.4 19.76" fill="#242424"><title>段落</title><text x="0" y="0" font-size="15.2">段落</text></svg>
<svg class="t" style="left:799.6px;top:149px" width="32.4" height="19.76" viewBox="0 -15.2 32.4 19.76" fill="#242424"><title>形状</title><text x="0" y="0" font-size="15.2">形状</text></svg>
<svg class="t" style="left:854.2px;top:149px" width="32.4" height="19.76" viewBox="0 -15.2 32.4 19.76" fill="#242424"><title>排列</title><text x="0" y="0" font-size="15.2">排列</text></svg>
<svg class="t" style="left:899.8px;top:149px" width="63.2" height="19.76" viewBox="0 -15.2 63.2 19.76" fill="#B9B9B9"><title>快速样式</title><text x="0" y="0" font-size="15.2" letter-spacing="0.1">快速样式</text></svg>
<svg class="t" style="left:877px;top:201px" width="32.4" height="19.76" viewBox="0 -15.2 32.4 19.76" fill="#242424"><title>绘图</title><text x="0" y="0" font-size="15.2">绘图</text></svg>
<svg class="t" style="left:1043.9px;top:147.2px" width="32.4" height="19.76" viewBox="0 -15.2 32.4 19.76" fill="#242424"><title>编辑</title><text x="0" y="0" font-size="15.2">编辑</text></svg>
<svg class="t" style="left:1116.2px;top:149px" width="78" height="19.76" viewBox="0 -15.2 78 19.76" fill="#242424"><title>创建并共享</title><text x="0" y="0" font-size="15.2">创建并共享</text></svg>
<svg class="t" style="left:1113.2px;top:168.1px" width="83.99" height="19.76" viewBox="0 -15.2 83.99 19.76" fill="#242424"><title>Adobe PDF</title><text x="0" y="0" font-size="15.6" letter-spacing="0.15">Adobe&#160;PDF</text></svg>
<svg class="t" style="left:1097.44px;top:201px" width="114.33" height="19.76" viewBox="0 -15.2 114.33 19.76" fill="#242424"><title>Adobe Acrobat</title><text x="0" y="0" font-size="15.8" letter-spacing="0.6">Adobe&#160;Acrobat</text></svg>
<svg class="t" style="left:1243px;top:149px" width="17.2" height="19.76" viewBox="0 -15.2 17.2 19.76" fill="#242424"><title>加</title><text x="0" y="0" font-size="15.2">加</text></svg>
<svg class="t" style="left:1236.4px;top:168px" width="32.4" height="19.76" viewBox="0 -15.2 32.4 19.76" fill="#242424"><title>载项</title><text x="0" y="0" font-size="15.2">载项</text></svg>
<svg class="t" style="left:1228.2px;top:201px" width="47.6" height="19.76" viewBox="0 -15.2 47.6 19.76" fill="#242424"><title>加载项</title><text x="0" y="0" font-size="15.2">加载项</text></svg>
<svg class="i" style="left:286px;top:135px" width="474" height="65" viewBox="286 135 474 65" ><text x="296.2" y="154.7" font-size="17" fill="#A6A6A6" textLength="10.2" lengthAdjust="spacingAndGlyphs" font-weight="bold">B</text><text x="329.2" y="154.7" font-size="18.6" fill="#ABABAB" font-style="italic" style="font-family:'Liberation Serif',serif">I</text><text x="358.4" y="154" font-size="16.2" fill="#ABABAB" textLength="11.8" lengthAdjust="spacingAndGlyphs" >U</text><text x="391.2" y="154.9" font-size="17.6" fill="#A8A8A8" textLength="10.2" lengthAdjust="spacingAndGlyphs" font-weight="bold">S</text><text x="421.2" y="155.8" font-size="14.8" fill="#ABABAB" textLength="15.6" lengthAdjust="spacingAndGlyphs" >ab</text><text x="450.8" y="151.2" font-size="14.8" fill="#ABABAB" textLength="20.6" lengthAdjust="spacingAndGlyphs" >AV</text><text x="346.2" y="185.5" font-size="18.3" fill="#ABABAB" textLength="12" lengthAdjust="spacingAndGlyphs" >A</text><text x="393.2" y="188.4" font-size="16.8" fill="#ABABAB" textLength="20.4" lengthAdjust="spacingAndGlyphs" >Aa</text><text x="449.2" y="188.4" font-size="22.3" fill="#ABABAB" textLength="14.2" lengthAdjust="spacingAndGlyphs" >A</text><text x="482.8" y="188.4" font-size="17.4" fill="#ABABAB" textLength="11.8" lengthAdjust="spacingAndGlyphs" >A</text><text x="515" y="188.4" font-size="22.3" fill="#ABABAB" textLength="12.4" lengthAdjust="spacingAndGlyphs" >A</text><text x="735.8" y="117" font-size="11.8" fill="#ABABAB" textLength="8" lengthAdjust="spacingAndGlyphs" >A</text></svg>
<div style="left:198px;top:226px;width:1px;height:670px;background:#CACACA;"></div>
<div class="sbtrack" style="left:174px;top:227px;width:21px;height:670px;background:#F5F5F5;border-radius:10px;"></div>
<svg class="i" style="left:175px;top:227px" width="20" height="670" viewBox="175 227 20 670" ><path d="M179.8 237.8L184.5 231L189.2 237.8Z" fill="#737373" stroke="#737373" stroke-width="1.6" stroke-linejoin="round"/><path d="M179.8 884.2L184.5 891L189.2 884.2Z" fill="#737373" stroke="#737373" stroke-width="1.6" stroke-linejoin="round"/></svg>
<div class="sbthumb" style="left:179.2px;top:245px;width:10.6px;height:193px;background:#737373;border-radius:5.3px;"></div>
<div class="sel" style="left:44px;top:245px;width:108px;height:64px;border:3px solid #B7472A;border-radius:7.5px;background:#fff;box-shadow:0 1px 2px rgba(0,0,0,.2);"></div>
<div class="thumb" style="left:47.6px;top:248.5px;width:100.6px;height:56.6px;border-radius:4px;background:#fff;overflow:hidden;"><div style="left:7.6px;top:6.6px;width:88px;height:1px;background:#18A8E8"></div><svg class="t" style="left:19.12px;top:27.5px" width="64.97" height="6.63" viewBox="0 -5.1 64.97 6.63" fill="#555"><title>内控体系建设项目-总结汇报</title><text x="0" y="0" font-size="5.1">内控体系建设项目-总结汇报</text></svg><svg class="t" style="left:44.38px;top:38.85px" width="14.25" height="2.27" viewBox="0 -1.75 14.25 2.27" fill="#666"><title>深圳市有限公司</title><text x="0" y="0" font-size="1.75" font-weight="bold">深圳市有限公司</text></svg><svg class="t" style="left:44.38px;top:41.85px" width="14.25" height="2.27" viewBox="0 -1.75 14.25 2.27" fill="#666"><title>二〇一八年一月</title><text x="0" y="0" font-size="1.75" font-weight="bold">二〇一八年一月</text></svg></div>
<svg class="t" style="left:14px;top:242.5px" width="20" height="24" viewBox="0 0 20 24"><text x="8.6" y="17.2" font-size="18.8" text-anchor="middle" fill="#C43E1C">1</text></svg>
<div class="thumb" style="left:47.6px;top:331.5px;width:100.6px;height:56.6px;border-radius:5px;background:#fff;overflow:hidden;box-shadow:0 0 0 1px #D4D4D4,0 1px 2.5px rgba(0,0,0,.26);"><div style="left:8.2px;top:3.9px;width:6px;height:1.2px;background:#777"></div><div style="left:8px;top:5.1px;width:87.6px;height:2.2px;background:linear-gradient(90deg,#0FA0E8,#55C3F3 75%,#1CA6E9)"></div><div style="left:27.6px;top:16.4px;width:57.6px;height:7px;border:0.8px solid #555;border-radius:3.5px;background:#EAEAEA"></div><div style="left:21.4px;top:18.6px;width:2px;height:1.6px;background:#444;opacity:.75"></div><div style="left:24px;top:19.6px;width:3.6px;height:0.8px;background:#555;opacity:.75"></div><div style="left:37px;top:19.2px;width:8px;height:1.4px;background:#888;opacity:.75"></div><div style="left:27.6px;top:26.2px;width:57.6px;height:7px;border:0.8px solid #555;border-radius:3.5px;background:#fff"></div><div style="left:21.4px;top:28.4px;width:2px;height:1.6px;background:#444;opacity:.75"></div><div style="left:24px;top:29.4px;width:3.6px;height:0.8px;background:#555;opacity:.75"></div><div style="left:37px;top:29px;width:8px;height:1.4px;background:#888;opacity:.75"></div></div>
<svg class="t" style="left:14px;top:325.5px" width="20" height="24" viewBox="0 0 20 24"><text x="8.6" y="17.2" font-size="18.8" text-anchor="middle" fill="#404040">2</text></svg>
<div class="thumb" style="left:47.6px;top:414.5px;width:100.6px;height:56.6px;border-radius:5px;background:#fff;overflow:hidden;box-shadow:0 0 0 1px #D4D4D4,0 1px 2.5px rgba(0,0,0,.26);"><div style="left:8.2px;top:3.4px;width:40px;height:1.7px;background:#2a2a2a"></div><div style="left:8px;top:5.1px;width:87.6px;height:2.2px;background:linear-gradient(90deg,#0FA0E8,#55C3F3 75%,#1CA6E9)"></div><div style="left:12px;top:9.8px;width:84px;height:1.2px;background:#aaa;opacity:.75"></div><div style="left:8.4px;top:13.6px;width:11px;height:1.2px;background:#aaa;opacity:.75"></div><div style="left:51px;top:16.2px;width:36px;height:1px;background:#bbb;opacity:.75"></div><div style="left:11.4px;top:23.4px;width:37.6px;height:3.6px;background:#DCDCDC"></div><div style="left:52.6px;top:23.4px;width:38.6px;height:3.6px;background:#DCDCDC"></div><div style="left:26px;top:24.6px;width:8px;height:1.2px;background:#777;opacity:.75"></div><div style="left:68px;top:24.6px;width:8px;height:1.2px;background:#777;opacity:.75"></div><div style="left:52.6px;top:28px;width:39px;height:18.6px;border:1px solid #4E7D32;background:#fff"></div><div style="left:55.6px;top:32.4px;width:10px;height:1.2px;background:#777;opacity:.75"></div><div style="left:66px;top:32.4px;width:13px;height:1.2px;background:#F05A6E;opacity:.75"></div><div style="left:53.6px;top:32.4px;width:1.2px;height:1.2px;background:#2B6CC4;opacity:.75"></div><div style="left:55.6px;top:36.4px;width:10px;height:1.2px;background:#777;opacity:.75"></div><div style="left:66px;top:36.4px;width:15px;height:1.2px;background:#F05A6E;opacity:.75"></div><div style="left:53.6px;top:36.4px;width:1.2px;height:1.2px;background:#2B6CC4;opacity:.75"></div><div style="left:55.6px;top:40.2px;width:10px;height:1.2px;background:#777;opacity:.75"></div><div style="left:66px;top:40.2px;width:13px;height:1.2px;background:#F05A6E;opacity:.75"></div><div style="left:53.6px;top:40.2px;width:1.2px;height:1.2px;background:#2B6CC4;opacity:.75"></div><div style="left:55.6px;top:44px;width:10px;height:1.2px;background:#777;opacity:.75"></div><div style="left:66px;top:44px;width:15px;height:1.2px;background:#F05A6E;opacity:.75"></div><div style="left:53.6px;top:44px;width:1.2px;height:1.2px;background:#2B6CC4;opacity:.75"></div></div>
<svg class="t" style="left:14px;top:408.5px" width="20" height="24" viewBox="0 0 20 24"><text x="8.6" y="17.2" font-size="18.8" text-anchor="middle" fill="#404040">3</text></svg>
<div class="thumb" style="left:47.6px;top:497.5px;width:100.6px;height:56.6px;border-radius:5px;background:#fff;overflow:hidden;box-shadow:0 0 0 1px #D4D4D4,0 1px 2.5px rgba(0,0,0,.26);"><div style="left:8.2px;top:3.4px;width:10px;height:1.7px;background:#2a2a2a"></div><div style="left:8px;top:5.1px;width:87.6px;height:2.2px;background:linear-gradient(90deg,#0FA0E8,#55C3F3 75%,#1CA6E9)"></div><div style="left:12px;top:9.6px;width:36px;height:1.2px;background:#888;opacity:.75"></div><div style="left:12px;top:13.6px;width:48px;height:1.2px;background:#999;opacity:.75"></div><div style="left:8.4px;top:17.6px;width:30px;height:3.4px;background:#DCDCDC"></div><div style="left:63.6px;top:17px;width:31.4px;height:3.6px;background:#DCDCDC"></div><div style="left:19px;top:18.8px;width:8px;height:1.2px;background:#666;opacity:.75"></div><div style="left:70px;top:18.2px;width:20px;height:1.2px;background:#666;opacity:.75"></div><svg class="i" style="left:0;top:0" width="101" height="57" viewBox="0 0 101 57"><path d="M8.6 22.2H39.4L41.6 27V46L39.4 51.4H8.6Z" fill="#fff" stroke="#111" stroke-width="0.9"/><path d="M95.2 22.2H64.4L62.2 27V46L64.4 51.4H95.2Z" fill="#fff" stroke="#111" stroke-width="0.9"/><ellipse cx="51.8" cy="35.4" rx="9.8" ry="12.2" fill="#E0E0E0" stroke="#F08228" stroke-width="0.9"/></svg><div style="left:46px;top:27.4px;width:11.4px;height:1.6px;background:#F06478;opacity:.75"></div><div style="left:48px;top:32px;width:8px;height:2px;background:#222;opacity:.75"></div><div style="left:48px;top:34.6px;width:8px;height:2px;background:#222;opacity:.75"></div><div style="left:48px;top:37.2px;width:8px;height:2px;background:#222;opacity:.75"></div><div style="left:48px;top:39.8px;width:8px;height:2px;background:#222;opacity:.75"></div><div style="left:48px;top:42.4px;width:8px;height:2px;background:#222;opacity:.75"></div><div style="left:10px;top:24.6px;width:9px;height:1.1px;background:#555;opacity:.75"></div><div style="left:10px;top:30px;width:27px;height:1.1px;background:#555;opacity:.75"></div><div style="left:10px;top:32px;width:4px;height:1.1px;background:#555;opacity:.75"></div><div style="left:10px;top:37.6px;width:15px;height:1.1px;background:#555;opacity:.75"></div><div style="left:10px;top:41px;width:23px;height:1.1px;background:#555;opacity:.75"></div><div style="left:10px;top:43px;width:13px;height:1.1px;background:#555;opacity:.75"></div><div style="left:10px;top:46.2px;width:9px;height:1.1px;background:#555;opacity:.75"></div><div style="left:65.4px;top:24.6px;width:11px;height:1.1px;background:#555;opacity:.75"></div><div style="left:80.6px;top:24.6px;width:11px;height:1.1px;background:#555;opacity:.75"></div><div style="left:65.4px;top:26.8px;width:8px;height:1.1px;background:#555;opacity:.75"></div><div style="left:80.6px;top:26.8px;width:8px;height:1.1px;background:#555;opacity:.75"></div><div style="left:65.4px;top:30px;width:8px;height:1.1px;background:#555;opacity:.75"></div><div style="left:80.6px;top:30px;width:7px;height:1.1px;background:#555;opacity:.75"></div><div style="left:65.4px;top:32.2px;width:9px;height:1.1px;background:#555;opacity:.75"></div><div style="left:80.6px;top:32.2px;width:10px;height:1.1px;background:#555;opacity:.75"></div><div style="left:65.4px;top:35.2px;width:8px;height:1.1px;background:#555;opacity:.75"></div><div style="left:80.6px;top:35.2px;width:7px;height:1.1px;background:#555;opacity:.75"></div><div style="left:65.4px;top:37.6px;width:10px;height:1.1px;background:#555;opacity:.75"></div><div style="left:80.6px;top:37.6px;width:12px;height:1.1px;background:#555;opacity:.75"></div><div style="left:65.4px;top:40.4px;width:9px;height:1.1px;background:#555;opacity:.75"></div><div style="left:80.6px;top:40.4px;width:7px;height:1.1px;background:#555;opacity:.75"></div><div style="left:65.4px;top:43px;width:12px;height:1.1px;background:#555;opacity:.75"></div><div style="left:80.6px;top:43px;width:8px;height:1.1px;background:#555;opacity:.75"></div><div style="left:65.4px;top:46.2px;width:11px;height:1.1px;background:#555;opacity:.75"></div><div style="left:80.6px;top:46.2px;width:12px;height:1.1px;background:#555;opacity:.75"></div></div>
<svg class="t" style="left:14px;top:491.5px" width="20" height="24" viewBox="0 0 20 24"><text x="8.6" y="17.2" font-size="18.8" text-anchor="middle" fill="#404040">4</text></svg>
<div class="thumb" style="left:47.6px;top:580.5px;width:100.6px;height:56.6px;border-radius:5px;background:#fff;overflow:hidden;box-shadow:0 0 0 1px #D4D4D4,0 1px 2.5px rgba(0,0,0,.26);"><div style="left:8.2px;top:3.4px;width:10px;height:1.7px;background:#2a2a2a"></div><div style="left:8px;top:5.1px;width:87.6px;height:2.2px;background:linear-gradient(90deg,#0FA0E8,#55C3F3 75%,#1CA6E9)"></div><div style="left:12px;top:10.2px;width:70px;height:1.2px;background:#aaa;opacity:.75"></div><div style="left:9.4px;top:17.2px;width:39.6px;height:3.6px;background:#E2E2E2"></div><div style="left:51.6px;top:17.2px;width:39.6px;height:3.6px;background:#E2E2E2"></div><div style="left:25px;top:18.4px;width:9px;height:1.2px;background:#888;opacity:.75"></div><div style="left:66px;top:18.4px;width:9px;height:1.2px;background:#888;opacity:.75"></div><div style="left:9.4px;top:22px;width:40px;height:29px;border:1px solid #3A2A18;background:#FDEFC8"></div><div style="left:51.6px;top:22px;width:40px;height:29px;border:1px solid #3A2A18;background:#FDEFC8"></div><div style="left:11px;top:23.6px;width:17px;height:1.2px;background:#4a4030;opacity:.75"></div><div style="left:11px;top:27px;width:5px;height:1.2px;background:#4a4030;opacity:.75"></div><div style="left:11px;top:28.8px;width:23px;height:1.2px;background:#4a4030;opacity:.75"></div><div style="left:11px;top:32px;width:32px;height:1.2px;background:#4a4030;opacity:.75"></div><div style="left:11px;top:35px;width:27px;height:1.2px;background:#4a4030;opacity:.75"></div><div style="left:11px;top:42.4px;width:6px;height:1.2px;background:#4a4030;opacity:.75"></div><div style="left:11px;top:44px;width:17px;height:1.2px;background:#4a4030;opacity:.75"></div><div style="left:11px;top:45.8px;width:20px;height:1.2px;background:#4a4030;opacity:.75"></div><div style="left:53px;top:23.6px;width:17px;height:1.2px;background:#4a4030;opacity:.75"></div><div style="left:53px;top:27px;width:6px;height:1.2px;background:#4a4030;opacity:.75"></div><div style="left:53px;top:28.8px;width:28px;height:1.2px;background:#4a4030;opacity:.75"></div><div style="left:53px;top:32px;width:16px;height:1.2px;background:#4a4030;opacity:.75"></div><div style="left:53px;top:35px;width:36px;height:1.2px;background:#4a4030;opacity:.75"></div><div style="left:53px;top:36.8px;width:36px;height:1.2px;background:#4a4030;opacity:.75"></div><div style="left:53px;top:42.4px;width:6px;height:1.2px;background:#4a4030;opacity:.75"></div><div style="left:53px;top:44px;width:24px;height:1.2px;background:#4a4030;opacity:.75"></div><div style="left:53px;top:46.6px;width:11px;height:1.2px;background:#4a4030;opacity:.75"></div></div>
<svg class="t" style="left:14px;top:574.5px" width="20" height="24" viewBox="0 0 20 24"><text x="8.6" y="17.2" font-size="18.8" text-anchor="middle" fill="#404040">5</text></svg>
<div class="thumb" style="left:47.6px;top:663.5px;width:100.6px;height:56.6px;border-radius:5px;background:#fff;overflow:hidden;box-shadow:0 0 0 1px #D4D4D4,0 1px 2.5px rgba(0,0,0,.26);"><div style="left:8.2px;top:3.4px;width:15px;height:1.7px;background:#2a2a2a"></div><div style="left:8px;top:5.1px;width:87.6px;height:2.2px;background:linear-gradient(90deg,#0FA0E8,#55C3F3 75%,#1CA6E9)"></div><div style="left:12px;top:10.4px;width:84px;height:1.2px;background:#aaa;opacity:.75"></div><div style="left:8.4px;top:14.4px;width:32px;height:1.2px;background:#aaa;opacity:.75"></div><div style="left:8.6px;top:19px;width:10.6px;height:35px;border:1px solid #222;background:#FBE9B8"></div><div style="left:12.6px;top:22.4px;width:2.6px;height:1.8px;background:#8a7a50;opacity:.75"></div><div style="left:12.6px;top:26.4px;width:2.6px;height:1.8px;background:#8a7a50;opacity:.75"></div><div style="left:12.6px;top:30.4px;width:2.6px;height:1.8px;background:#8a7a50;opacity:.75"></div><div style="left:12.6px;top:34.4px;width:2.6px;height:1.8px;background:#8a7a50;opacity:.75"></div><div style="left:12.6px;top:38.4px;width:2.6px;height:1.8px;background:#8a7a50;opacity:.75"></div><div style="left:12.6px;top:42.4px;width:2.6px;height:1.8px;background:#8a7a50;opacity:.75"></div><div style="left:12.6px;top:46.4px;width:2.6px;height:1.8px;background:#8a7a50;opacity:.75"></div><div style="left:12.6px;top:49.6px;width:2.6px;height:1.8px;background:#8a7a50;opacity:.75"></div><div style="left:20.8px;top:19.4px;width:17.4px;height:3.4px;background:#E0E0E0"></div><div style="left:26.4px;top:20.6px;width:6px;height:1.2px;background:#777;opacity:.75"></div><div style="left:20.4px;top:26px;width:18.6px;height:28px;border:1px solid #111;background:#fff"></div><div style="left:22px;top:28px;width:9px;height:1.1px;background:#555;opacity:.75"></div><div style="left:22px;top:30.4px;width:14px;height:1.1px;background:#555;opacity:.75"></div><div style="left:22px;top:32.6px;width:12px;height:1.1px;background:#555;opacity:.75"></div><div style="left:22px;top:35px;width:15px;height:1.1px;background:#555;opacity:.75"></div><div style="left:22px;top:39.6px;width:7px;height:1.1px;background:#555;opacity:.75"></div><div style="left:22px;top:41.6px;width:12px;height:1.1px;background:#555;opacity:.75"></div><div style="left:22px;top:43.4px;width:8px;height:1.1px;background:#555;opacity:.75"></div><div style="left:22px;top:45.4px;width:6px;height:1.1px;background:#555;opacity:.75"></div><div style="left:22px;top:47.6px;width:7px;height:1.1px;background:#555;opacity:.75"></div><div style="left:22px;top:49.6px;width:9px;height:1.1px;background:#555;opacity:.75"></div><div style="left:22px;top:51.4px;width:10px;height:1.1px;background:#555;opacity:.75"></div><div style="left:39.4px;top:19.4px;width:17.4px;height:3.4px;background:#E0E0E0"></div><div style="left:45px;top:20.6px;width:6px;height:1.2px;background:#777;opacity:.75"></div><div style="left:39px;top:26px;width:18.6px;height:28px;border:1px solid #111;background:#fff"></div><div style="left:40.6px;top:28px;width:9px;height:1.1px;background:#555;opacity:.75"></div><div style="left:40.6px;top:30.4px;width:14px;height:1.1px;background:#555;opacity:.75"></div><div style="left:40.6px;top:32.6px;width:12px;height:1.1px;background:#555;opacity:.75"></div><div style="left:40.6px;top:35px;width:15px;height:1.1px;background:#555;opacity:.75"></div><div style="left:40.6px;top:39.6px;width:7px;height:1.1px;background:#555;opacity:.75"></div><div style="left:40.6px;top:41.6px;width:12px;height:1.1px;background:#555;opacity:.75"></div><div style="left:40.6px;top:43.4px;width:8px;height:1.1px;background:#555;opacity:.75"></div><div style="left:40.6px;top:45.4px;width:6px;height:1.1px;background:#555;opacity:.75"></div><div style="left:57.8px;top:19.4px;width:17.4px;height:3.4px;background:#E0E0E0"></div><div style="left:63.4px;top:20.6px;width:6px;height:1.2px;background:#777;opacity:.75"></div><div style="left:57.4px;top:26px;width:18.6px;height:28px;border:1px solid #111;background:#fff"></div><div style="left:59px;top:28px;width:9px;height:1.1px;background:#555;opacity:.75"></div><div style="left:59px;top:30.4px;width:14px;height:1.1px;background:#555;opacity:.75"></div><div style="left:59px;top:32.6px;width:12px;height:1.1px;background:#555;opacity:.75"></div><div style="left:59px;top:35px;width:15px;height:1.1px;background:#555;opacity:.75"></div><div style="left:59px;top:39.6px;width:7px;height:1.1px;background:#555;opacity:.75"></div><div style="left:59px;top:41.6px;width:12px;height:1.1px;background:#555;opacity:.75"></div><div style="left:59px;top:43.4px;width:8px;height:1.1px;background:#555;opacity:.75"></div><div style="left:76.4px;top:19.4px;width:17.4px;height:3.4px;background:#E0E0E0"></div><div style="left:82px;top:20.6px;width:6px;height:1.2px;background:#777;opacity:.75"></div><div style="left:76px;top:26px;width:18.6px;height:28px;border:1px solid #111;background:#fff"></div><div style="left:77.6px;top:28px;width:9px;height:1.1px;background:#555;opacity:.75"></div><div style="left:77.6px;top:30.4px;width:14px;height:1.1px;background:#555;opacity:.75"></div><div style="left:77.6px;top:32.6px;width:12px;height:1.1px;background:#555;opacity:.75"></div><div style="left:77.6px;top:35px;width:15px;height:1.1px;background:#555;opacity:.75"></div><div style="left:77.6px;top:39.6px;width:7px;height:1.1px;background:#555;opacity:.75"></div></div>
<svg class="t" style="left:14px;top:657.5px" width="20" height="24" viewBox="0 0 20 24"><text x="8.6" y="17.2" font-size="18.8" text-anchor="middle" fill="#404040">6</text></svg>
<div class="thumb" style="left:47.6px;top:746.5px;width:100.6px;height:56.6px;border-radius:5px;background:#fff;overflow:hidden;box-shadow:0 0 0 1px #D4D4D4,0 1px 2.5px rgba(0,0,0,.26);"><div style="left:8.2px;top:3.7px;width:6px;height:1.4px;background:#444"></div><div style="left:8px;top:5.1px;width:87.6px;height:2.2px;background:linear-gradient(90deg,#0FA0E8,#55C3F3 75%,#1CA6E9)"></div><div style="left:27.6px;top:16.8px;width:57.6px;height:7px;border:0.8px solid #555;border-radius:3.5px;background:#fff"></div><div style="left:21.4px;top:19px;width:1.2px;height:1.6px;background:#444;opacity:.75"></div><div style="left:24px;top:20px;width:3.6px;height:0.8px;background:#555;opacity:.75"></div><div style="left:37px;top:19.2px;width:8.4px;height:1.8px;background:#222;opacity:.75"></div><div style="left:27.6px;top:26.4px;width:57.6px;height:7px;border:0.8px solid #555;border-radius:3.5px;background:#EAEAEA"></div><div style="left:21.4px;top:28.6px;width:1.2px;height:1.6px;background:#444;opacity:.75"></div><div style="left:24px;top:29.6px;width:3.6px;height:0.8px;background:#555;opacity:.75"></div><div style="left:37px;top:28.8px;width:8.4px;height:1.8px;background:#222;opacity:.75"></div></div>
<svg class="t" style="left:14px;top:740.5px" width="20" height="24" viewBox="0 0 20 24"><text x="8.6" y="17.2" font-size="18.8" text-anchor="middle" fill="#404040">7</text></svg>
<div class="thumb" style="left:47.6px;top:829.5px;width:100.6px;height:56.6px;border-radius:5px;background:#fff;overflow:hidden;box-shadow:0 0 0 1px #D4D4D4,0 1px 2.5px rgba(0,0,0,.26);"><div style="left:8.2px;top:3.4px;width:10px;height:1.7px;background:#2a2a2a"></div><div style="left:8px;top:5.1px;width:87.6px;height:2.2px;background:linear-gradient(90deg,#0FA0E8,#55C3F3 75%,#1CA6E9)"></div><div style="left:12px;top:10.2px;width:68px;height:1.2px;background:#aaa;opacity:.75"></div><div style="left:10.4px;top:21.4px;width:35.6px;height:3.6px;background:#E2E2E2"></div><div style="left:54.4px;top:21.4px;width:36.6px;height:3.6px;background:#E2E2E2"></div><div style="left:19px;top:22.6px;width:18px;height:1.3px;background:#888;opacity:.75"></div><div style="left:63px;top:22.6px;width:18px;height:1.3px;background:#888;opacity:.75"></div><div style="left:10.4px;top:26px;width:36.6px;height:28px;border:1.2px solid #111;background:#fff"></div><div style="left:54.4px;top:26px;width:37.6px;height:28px;border:1.2px solid #111;background:#fff"></div><div style="left:12.4px;top:28.4px;width:13px;height:1.1px;background:#555;opacity:.75"></div><div style="left:12.4px;top:30.6px;width:11px;height:1.1px;background:#555;opacity:.75"></div><div style="left:12.4px;top:34px;width:10px;height:1.1px;background:#555;opacity:.75"></div><div style="left:12.4px;top:36.4px;width:16px;height:1.1px;background:#F05A6E;opacity:.75"></div><div style="left:12.4px;top:39.6px;width:17px;height:1.1px;background:#F05A6E;opacity:.75"></div><div style="left:12.4px;top:41.6px;width:23px;height:1.1px;background:#F05A6E;opacity:.75"></div><div style="left:56.4px;top:28.4px;width:13px;height:1.1px;background:#F05A6E;opacity:.75"></div><div style="left:56.4px;top:30.6px;width:12px;height:1.1px;background:#555;opacity:.75"></div><div style="left:56.4px;top:33.6px;width:17px;height:1.1px;background:#555;opacity:.75"></div><div style="left:56.4px;top:36.4px;width:12px;height:1.1px;background:#555;opacity:.75"></div><div style="left:56.4px;top:39.2px;width:13px;height:1.1px;background:#F05A6E;opacity:.75"></div><div style="left:56.4px;top:41.6px;width:10px;height:1.1px;background:#F05A6E;opacity:.75"></div><div style="left:56.4px;top:44.8px;width:14px;height:1.1px;background:#F05A6E;opacity:.75"></div></div>
<svg class="t" style="left:14px;top:823.5px" width="20" height="24" viewBox="0 0 20 24"><text x="8.6" y="17.2" font-size="18.8" text-anchor="middle" fill="#404040">8</text></svg>
<div class="slide" style="left:230px;top:234px;width:1082px;height:610px;background:#fff;border:1px solid #C4C4C4;"></div>
<svg class="i" style="left:300px;top:290px" width="956" height="16" viewBox="300 290 956 16" ><path d="M305.2 298.5L1250.6 297.4" stroke="#00ABEE" stroke-width="3" stroke-linecap="butt" fill="none"/></svg>
<svg class="t" style="left:435.09px;top:517.4px" width="675.02" height="70.72" viewBox="0 -54.4 675.02 70.72" fill="#000"><title>内控体系建设项目-总结汇报</title><text x="0" y="0" font-size="56.3" textLength="673" lengthAdjust="spacingAndGlyphs">内控体系建设项目-总结汇报</text></svg>
<svg class="t" style="left:707.65px;top:655.5px" width="128.7" height="23.53" viewBox="0 -18.1 128.7 23.53" fill="#000"><title>深圳市有限公司</title><text x="0" y="0" font-size="18.64" font-weight="bold" textLength="126.7" lengthAdjust="spacingAndGlyphs">深圳市有限公司</text></svg>
<svg class="t" style="left:707.65px;top:685.2px" width="128.7" height="23.53" viewBox="0 -18.1 128.7 23.53" fill="#000"><title>二〇一八年一月</title><text x="0" y="0" font-size="18.64" font-weight="bold" textLength="126.7" lengthAdjust="spacingAndGlyphs">二〇一八年一月</text></svg>
<div class="sbtrack" style="left:1342px;top:227px;width:20px;height:563px;background:#F6F6F6;border-radius:10px;"></div>
<div class="sbtrack" style="left:1342px;top:861px;width:20px;height:36px;background:#F6F6F6;border-radius:10px;"></div>
<svg class="i" style="left:1340px;top:227px" width="23" height="670" viewBox="1340 227 23 670" ><path d="M1347 237.8L1351.6 231.4L1356.2 237.8Z" fill="#737373" stroke="#737373" stroke-width="1.6" stroke-linejoin="round"/><path d="M1347 777.4L1351.6 783.8L1356.2 777.4Z" fill="#737373" stroke="#737373" stroke-width="1.6" stroke-linejoin="round"/><path d="M1347 800.6L1351.6 794L1356.2 800.6Z" fill="#737373" stroke="#737373" stroke-width="1.6" stroke-linejoin="round"/><path d="M1347 807.2L1351.6 800.6L1356.2 807.2Z" fill="#737373" stroke="#737373" stroke-width="1.6" stroke-linejoin="round"/><path d="M1347 814.6L1351.6 821.2L1356.2 814.6Z" fill="#737373" stroke="#737373" stroke-width="1.6" stroke-linejoin="round"/><path d="M1347 821.2L1351.6 827.8L1356.2 821.2Z" fill="#737373" stroke="#737373" stroke-width="1.6" stroke-linejoin="round"/><path d="M1347.4 872L1351.6 866.6L1355.8 872Z" fill="#737373" stroke="#737373" stroke-width="1.6" stroke-linejoin="round"/><path d="M1347.4 886L1351.6 891.4L1355.8 886Z" fill="#737373" stroke="#737373" stroke-width="1.6" stroke-linejoin="round"/></svg>
<div class="sbthumb" style="left:1346px;top:245.2px;width:11px;height:20.4px;background:#737373;border-radius:5.5px;"></div>
<div style="left:201px;top:857px;width:1161px;height:1px;background:#CACACA;"></div>
<svg class="t" style="left:213.4px;top:866.3px" width="148.4" height="23.79" viewBox="0 -18.3 148.4 23.79" fill="#5A5A5A"><title>单击此处添加备注</title><text x="0" y="0" font-size="18.3">单击此处添加备注</text></svg>
<div class="statusbar" style="left:1px;top:898px;width:1361px;height:27px;background:#F4F4F4;border-top:1px solid #C8C8C8;"></div>
<div class="viewbtn" style="left:897px;top:899px;width:49.6px;height:25.4px;background:#DADADA;"></div>
<svg class="t" style="left:11px;top:902.1px" width="169.7" height="20.15" viewBox="0 -15.5 169.7 20.15" fill="#2B2B2B"><title>幻灯片 第 1 张，共 26 张</title><text x="0" y="0" font-size="15.5" letter-spacing="-0.45">幻灯片</text><text x="48.6" y="0" font-size="15.5">第</text><text x="68.4" y="0" font-size="15.6">1</text><text x="79.8" y="0" font-size="15.5">张</text><text x="94.6" y="0" font-size="15.5">，</text><text x="110.4" y="0" font-size="15.5">共</text><text x="130.2" y="0" font-size="15.6" letter-spacing="-0.2">26</text><text x="152.2" y="0" font-size="15.5">张</text></svg>
<svg class="t" style="left:219.2px;top:902.1px" width="132.46" height="20.15" viewBox="0 -15.5 132.46 20.15" fill="#2B2B2B"><title>简体中文(中国大陆)</title><text x="0" y="0" font-size="15.5">简体中文</text><text x="60.4" y="-0.6" font-size="14.6">(</text><text x="65.2" y="0" font-size="15.5">中国大陆</text><text x="125.6" y="-0.6" font-size="14.6">)</text></svg>
<svg class="t" style="left:391.6px;top:902.1px" width="100.6" height="20.15" viewBox="0 -15.5 100.6 20.15" fill="#2B2B2B"><title>辅助功能: 调查</title><text x="0" y="0" font-size="15.5" font-weight="bold" letter-spacing="-0.3">辅助功能</text><text x="60.2" y="-0.4" font-size="15" font-weight="bold">:</text><text x="68.2" y="0" font-size="15.5" font-weight="bold" letter-spacing="-0.3">调查</text></svg>
<svg class="t" style="left:766.4px;top:902.1px" width="33" height="20.15" viewBox="0 -15.5 33 20.15" fill="#2B2B2B"><title>备注</title><text x="0" y="0" font-size="15.5">备注</text></svg>
<svg class="t" style="left:843px;top:902.1px" width="33" height="20.15" viewBox="0 -15.5 33 20.15" fill="#2B2B2B"><title>批注</title><text x="0" y="0" font-size="15.5">批注</text></svg>
<svg class="t" style="left:1276.2px;top:901.9px" width="33.82" height="20.15" viewBox="0 -15.5 33.82 20.15" fill="#2B2B2B"><title>68%</title><text x="0" y="0" font-size="15.9">68%</text></svg>
<svg class="i" style="left:1px;top:899px" width="1361" height="26" viewBox="1 899 1361 26" ><circle cx="377.7" cy="906" r="2.05" fill="none" stroke="#3A3A3A" stroke-width="1.15"/><path d="M375.4 908.7L371.7 907A1.05 1.05 0 0 0 370.7 908.9L374.5 910.8V913L372.7 918.4A1.2 1.2 0 0 0 374.9 919.3L377.3 914.6L378.9 917.6M375.4 908.7Q377.7 909.7 380 908.7L383.7 907A1.05 1.05 0 0 1 384.7 908.9L380.6 910.9" fill="none" stroke="#3A3A3A" stroke-width="1.15" stroke-linecap="round" stroke-linejoin="round"/><path d="M379.3 912.2L387.6 920.5M387.6 912.2L379.3 920.5" fill="none" stroke="#3A3A3A" stroke-width="1.15" stroke-linecap="butt"/><path d="M749.6 908.4L754.6 904.2L759.6 908.4M744.4 913.4H765M744.4 917.2H765M744.4 921H765" fill="none" stroke="#3A3A3A" stroke-width="1.25"/><path d="M822.4 905H840V916H830L826.2 919.8V916H822.4Z" fill="none" stroke="#3A3A3A" stroke-width="1.2" stroke-linejoin="round"/><rect x="913.4" y="905.4" width="17" height="14" fill="none" stroke="#3A3A3A" stroke-width="1.3"/><path d="M917 905.4V919.4" stroke="#3A3A3A" stroke-width="1.2" fill="none"/><rect x="920" y="908.6" width="7.4" height="6" fill="none" stroke="#3A3A3A" stroke-width="1.2"/><rect x="963.6" y="905.4" width="7" height="5.6" fill="none" stroke="#3A3A3A" stroke-width="1.2"/><rect x="974" y="905.4" width="7" height="5.6" fill="none" stroke="#3A3A3A" stroke-width="1.2"/><rect x="963.6" y="914.2" width="7" height="5.6" fill="none" stroke="#3A3A3A" stroke-width="1.2"/><rect x="974" y="914.2" width="7" height="5.6" fill="none" stroke="#3A3A3A" stroke-width="1.2"/><path d="M1021.5 906.6C1019 905 1016 904.8 1013.6 905.4V917.6C1016 917 1019 917.2 1021.5 918.8C1024 917.2 1027 917 1029.4 917.6V905.4C1027 904.8 1024 905 1021.5 906.6ZM1021.5 906.6V918.8" fill="none" stroke="#3A3A3A" stroke-width="1.2" stroke-linejoin="round"/><path d="M1015.6 908.4H1019.6M1015.6 911H1019.6M1015.6 913.6H1019.6M1023.4 908.4H1027.4M1023.4 911H1027.4M1023.4 913.6H1027.4" stroke="#3A3A3A" stroke-width="0.9" fill="none"/><path d="M1062.4 905H1080.6M1064.4 905V913.4H1078.6V905M1071.5 913.4V919.4M1067.4 919.6H1075.6" fill="none" stroke="#3A3A3A" stroke-width="1.3"/><path d="M1103.6 912L1113.4 912" stroke="#3A3A3A" stroke-width="1.2" stroke-linecap="butt" fill="none"/><path d="M1120 912L1245 912" stroke="#5A5A5A" stroke-width="1" stroke-linecap="butt" fill="none"/><path d="M1182.5 909L1182.5 915" stroke="#5A5A5A" stroke-width="1" stroke-linecap="butt" fill="none"/><rect x="1158.8" y="905.2" width="5.8" height="13.4" fill="#555"/><path d="M1250.4 912H1260.4M1255.4 907V917" stroke="#3A3A3A" stroke-width="1.2" fill="none"/><rect x="1327.4" y="906.8" width="9.6" height="9.6" rx="1" fill="none" stroke="#3A3A3A" stroke-width="1.3"/><path d="M1329.6 904.6L1332.2 902.2L1334.8 904.6M1329.6 918.6L1332.2 921L1334.8 918.6M1325.2 909L1322.8 911.6L1325.2 914.2M1339.2 909L1341.6 911.6L1339.2 914.2" fill="none" stroke="#3A3A3A" stroke-width="1.1"/></svg>
<div style="left:0px;top:0px;width:1px;height:926px;background:#C43E1C;"></div>
<div style="left:1361.8px;top:61px;width:1.2px;height:865px;background:#C43E1C;"></div>
<div style="left:0px;top:925px;width:1363px;height:1px;background:#C43E1C;"></div>
<div style="left:0px;top:924px;width:1363px;height:1px;background:#C43E1C;opacity:.5;"></div>
</div>
</body></html>
